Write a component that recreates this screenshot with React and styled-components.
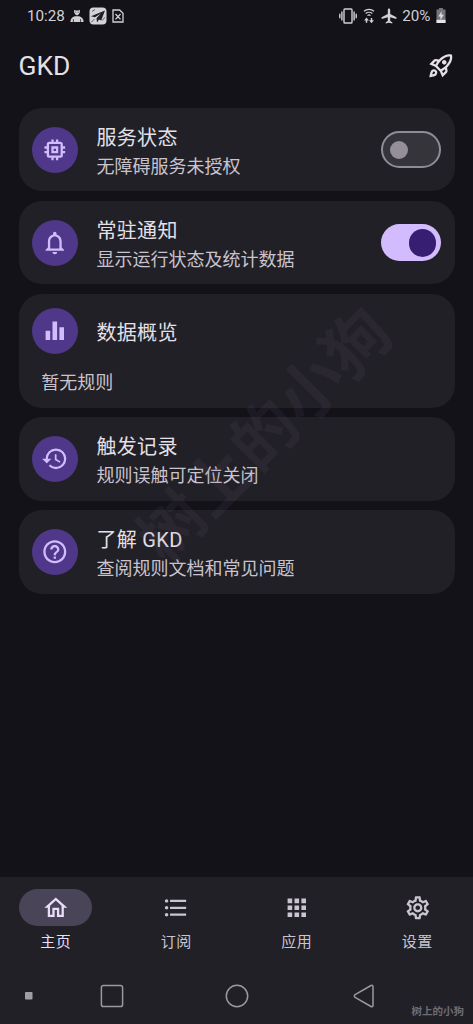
import React from "react";
import styled, { createGlobalStyle } from "styled-components";
import {
  MdApps,
  MdEqualizer,
  MdFormatListBulleted,
  MdHelpOutline,
  MdHistory,
  MdMemory,
  MdNotificationsNone,
  MdOutlineHome,
  MdOutlineRocketLaunch,
  MdOutlineSettings,
} from "react-icons/md";

const cards = [
  { icon: MdMemory, title: "服务状态", text: "无障碍服务未授权", toggle: "off" },
  { icon: MdNotificationsNone, title: "常驻通知", text: "显示运行状态及统计数据", toggle: "on" },
  { icon: MdEqualizer, title: "数据概览", footer: "暂无规则" },
  { icon: MdHistory, title: "触发记录", text: "规则误触可定位关闭" },
  { icon: MdHelpOutline, title: "了解 GKD", text: "查阅规则文档和常见问题" },
];

const tabs = [
  { icon: MdOutlineHome, label: "主页", active: true },
  { icon: MdFormatListBulleted, label: "订阅" },
  { icon: MdApps, label: "应用" },
  { icon: MdOutlineSettings, label: "设置" },
];

const StatusBar = () => (
  <StatusRow>
    <StatusText>10:28</StatusText>
    <StatusLeft>
      <svg width="14" height="14" viewBox="0 0 14 14" fill="currentColor">
        <path d="M4.200.8 5.600 1.600h2.800L9.800.8l.1 2.600L8.600 5.600 7 6.600l-1.600-1L4.100 3.400Z" />
        <path d="M.4 13c.1-3.200 1.700-4.700 4.500-5.700h4.200c2.800 1 4.400 2.500 4.500 5.700Z" />
        <path d="M5.300 3.200h1M7.700 3.200h1M3.400 10v3M10.600 10v3" stroke="#131218" strokeWidth=".7" />
      </svg>
      <svg width="18" height="18" viewBox="0 0 18 18">
        <rect x=".5" y=".5" width="17" height="17" rx="4" fill="#d5d3d7" />
        <path d="M16 3.500 2 9.200l4 1 5.800-3.800-4.300 4.800.5 4.200 2-2.900 2.200 1Z" fill="#1f1e24" />
        <path d="M2 15.500 5.500 12M13.300 13.500l2.700-3.200M3 4.500l3-2" stroke="#55535b" strokeWidth=".9" />
      </svg>
      <svg width="12" height="14" viewBox="0 0 12 14" fill="none" stroke="currentColor" strokeWidth="1.300">
        <path d="M1 1h6.600L11 4.300V13H1ZM3.500 5l5 5.400M8.500 5l-5 5.400" />
      </svg>
    </StatusLeft>
    <StatusRight>
      <svg width="18" height="16" viewBox="0 0 18 16" fill="none" stroke="currentColor" strokeWidth="1.400">
        <rect x="5" y="1" width="8" height="14" rx=".8" />
        <path d="M2.900 3.500v9M15.100 3.500v9M.8 5.800v4.400M17.200 5.800v4.400" />
      </svg>
      <svg width="12" height="16" viewBox="0 0 12 16" fill="none" stroke="currentColor" strokeWidth="1.200">
        <path d="M1 3.300C3.800.7 8.200.7 11 3.300M2.700 5.500c1.800-1.700 4.800-1.700 6.600 0M4.500 7.600c.8-.8 2.200-.8 3 0" />
        <path d="M3.500 14.800v-3M8.500 10v3" strokeWidth="1.500" />
        <path d="m1.100 12.600 2.400-3 2.400 3ZM6.100 12.200l2.400 3 2.400-3Z" fill="currentColor" stroke="none" />
      </svg>
      <svg width="16" height="16" viewBox="0 0 16 16" fill="currentColor">
        <path d="M8 .6c.8 0 1.200.7 1.200 1.500v3.800l6.200 3.400v1.700L9.200 9.300v3.600l2.100 1.400v1.200L8 14.700l-3.300.8v-1.200l2.100-1.400V9.300L.6 11V9.300l6.200-3.400V2.100C6.800 1.300 7.200.6 8 .6Z" />
      </svg>
      <StatusText>20%</StatusText>
      <svg width="10" height="15" viewBox="0 0 10 15">
        <path d="M3 0h4v1.500h2.500V15H.5V1.500H3Z" fill="#77757b" />
        <path d="M.5 11.800h9V15h-9Z" fill="#e6e3e9" />
        <path d="M5.600 3.200 2.300 8.600h2.100v3.600l3.400-5.400H5.600Z" fill="#dedce0" />
      </svg>
    </StatusRight>
  </StatusRow>
);

const SystemKeys = () => (
  <KeyRow>
    <svg width="8" height="8">
      <rect width="7.500" height="7.500" rx=".8" fill="#a09ea3" />
    </svg>
    <svg width="24" height="24" viewBox="0 0 24 24" fill="none" stroke="#9b999f" strokeWidth="1.500">
      <rect x="1.400" y="1.400" width="21.200" height="21.200" rx="2.200" />
    </svg>
    <svg width="24" height="24" viewBox="0 0 24 24" fill="none" stroke="#9b999f" strokeWidth="1.500">
      <circle cx="12" cy="12" r="10.700" />
    </svg>
    <svg width="22" height="24" viewBox="0 0 22 24" fill="none" stroke="#9b999f" strokeWidth="1.500">
      <path d="M18 1.500 2.100 10.700a1.500 1.500 0 0 0 0 2.600L18 22.500a1.300 1.300 0 0 0 2-1.100V2.600a1.300 1.300 0 0 0-2-1.100Z" />
    </svg>
  </KeyRow>
);

const App = () => {
  return (
    <Screen>
      <GlobalStyle />
      <StatusBar />
      <Header>
        <Heading>GKD</Heading>
        <MdOutlineRocketLaunch size={27.6} />
      </Header>
      <CardList>
        {cards.map(({ icon: Icon, title, text, footer, toggle }) => (
          <Card key={title}>
            <CardRow>
              <IconCircle>
                <Icon size={27.6} />
              </IconCircle>
              <CardBody>
                <CardTitle>{title}</CardTitle>
                {text && <CardText>{text}</CardText>}
              </CardBody>
              {toggle && (
                <Switch $on={toggle === "on"}>
                  <Thumb $on={toggle === "on"} />
                </Switch>
              )}
            </CardRow>
            {footer && <CardFooter>{footer}</CardFooter>}
          </Card>
        ))}
      </CardList>
      <Watermark>树上的小狗</Watermark>
      <BottomArea>
        <TabBar>
          {tabs.map(({ icon: Icon, label, active }) => (
            <Tab key={label} $active={active}>
              <TabIcon $active={active}>
                <Icon size={27.6} />
              </TabIcon>
              <TabLabel>{label}</TabLabel>
            </Tab>
          ))}
        </TabBar>
        <SystemKeys />
        <Signature>树上的小狗</Signature>
      </BottomArea>
    </Screen>
  );
};

const GlobalStyle = createGlobalStyle`
  * {
    box-sizing: border-box;
  }

  body {
    margin: 0;
    background: #131218;
    font-family: Roboto, "Noto Sans CJK SC", sans-serif;
  }

  svg {
    display: block;
    flex-shrink: 0;
  }
`;

const Screen = styled.div`
  position: relative;
  display: flex;
  flex-direction: column;
  width: 473px;
  height: 1024px;
  overflow: hidden;
  background: #131218;
  color: #e5e0e8;
`;

const StatusRow = styled.div`
  display: flex;
  align-items: center;
  height: 30px;
  padding: 1px 27px 0;
  color: #d2d0d5;
`;

const StatusText = styled.span`
  font-size: 15.2px;
  line-height: 20px;
`;

const StatusLeft = styled.div`
  display: flex;
  align-items: center;
  gap: 5px;
  margin-left: 5.5px;
`;

const StatusRight = styled.div`
  display: flex;
  align-items: center;
  gap: 5.6px;
  margin-left: auto;
`;

const Header = styled.header`
  display: flex;
  align-items: center;
  justify-content: space-between;
  height: 72px;
  padding: 0 18.5px;
`;

const Heading = styled.h1`
  margin: 0;
  font-size: 26.4px;
  font-weight: 400;
  line-height: 32px;
`;

const CardList = styled.main`
  display: flex;
  flex: 1;
  flex-direction: column;
  gap: 9.6px;
  padding: 6px 18.5px 0;
`;

const Card = styled.section`
  padding: 13.5px;
  border-radius: 23px;
  background: #212026;
`;

const CardRow = styled.div`
  display: flex;
  align-items: center;
`;

const IconCircle = styled.div`
  display: flex;
  align-items: center;
  justify-content: center;
  width: 46px;
  height: 46px;
  border-radius: 50%;
  background: #4f378a;
  color: #d3bcfd;
`;

const CardBody = styled.div`
  flex: 1;
  margin: 0 0 -2.5px 18.5px;
  padding-top: 2.5px;
`;

const CardTitle = styled.div`
  font-size: 20px;
  line-height: 29px;
  letter-spacing: 0.3px;
`;

const CardText = styled.div`
  color: #c9c3ce;
  font-size: 18px;
  line-height: 27.4px;
`;

const CardFooter = styled.div`
  margin-top: 15px;
  margin-bottom: -1.5px;
  padding-left: 9.2px;
  color: #c9c3ce;
  font-size: 18px;
  line-height: 27px;
`;

const Switch = styled.div`
  display: flex;
  align-items: center;
  justify-content: ${(props) => (props.$on ? "flex-end" : "flex-start")};
  width: 60px;
  height: 37px;
  padding: ${(props) => (props.$on ? "0 4.6px" : "0 6.8px")};
  border: ${(props) => (props.$on ? "none" : "2.3px solid #8f8c95")};
  border-radius: 19px;
  background: ${(props) => (props.$on ? "#d3bcfd" : "#36343b")};
`;

const Thumb = styled.div`
  width: ${(props) => (props.$on ? "27.6px" : "18.4px")};
  height: ${(props) => (props.$on ? "27.6px" : "18.4px")};
  border-radius: 50%;
  background: ${(props) => (props.$on ? "#371e73" : "#948f99")};
`;

const Watermark = styled.div`
  position: absolute;
  left: 266px;
  top: 436px;
  color: rgba(110, 90, 135, 0.12);
  font-size: 65px;
  font-weight: 700;
  line-height: 1;
  white-space: nowrap;
  pointer-events: none;
  transform: translate(-50%, -50%) rotate(-45deg);
`;

const BottomArea = styled.footer`
  position: relative;
  height: 147px;
  background: #212026;
`;

const TabBar = styled.nav`
  display: grid;
  grid-template-columns: repeat(4, 1fr);
  gap: 9.2px;
  height: 92px;
  padding-top: 12px;
`;

const Tab = styled.div`
  display: flex;
  flex-direction: column;
  align-items: center;
  color: ${(props) => (props.$active ? "#e8def8" : "#cac4d0")};
`;

const TabIcon = styled.div`
  display: flex;
  align-items: center;
  justify-content: center;
  width: 73.6px;
  height: 36.8px;
  border-radius: 19px;
  background: ${(props) => (props.$active ? "#4a4458" : "transparent")};
`;

const TabLabel = styled.div`
  margin-top: 5.6px;
  font-size: 15px;
  line-height: 22px;
  letter-spacing: 0.5px;
`;

const KeyRow = styled.div`
  display: grid;
  grid-template-columns: 58px 108px 142px 111px;
  align-items: center;
  justify-items: center;
  height: 55px;
  padding-bottom: 1px;
`;

const Signature = styled.div`
  position: absolute;
  right: 9px;
  bottom: 4.5px;
  color: #6f6d74;
  font-size: 10.5px;
  font-weight: 700;
  line-height: 16px;
`;

export default App;
